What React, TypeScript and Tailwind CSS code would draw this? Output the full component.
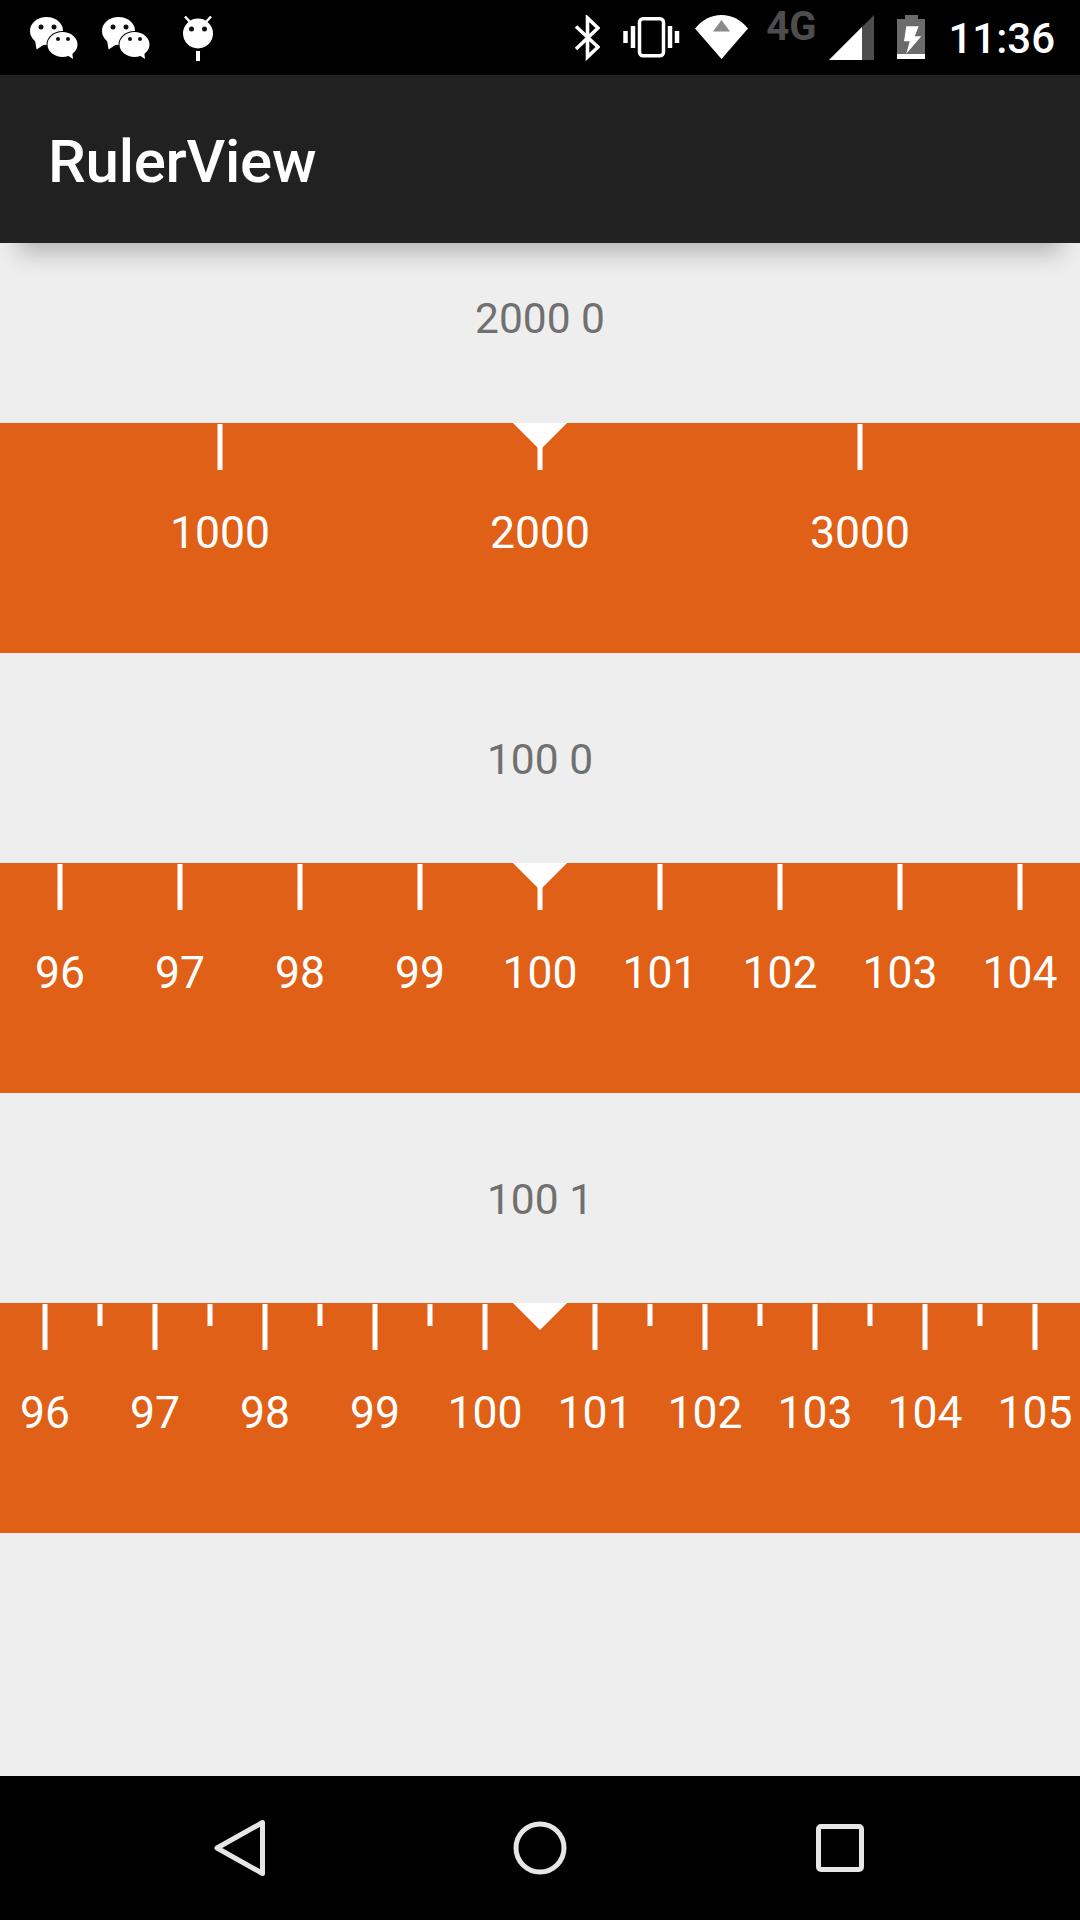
const font = { fontFamily: "Roboto, sans-serif" };

function Wechat() {
  return (
    <svg width="48" height="42" viewBox="0 0 48 42" className="block">
      <ellipse cx="16.500" cy="14" rx="16.500" ry="14" fill="#fff" />
      <path d="M5 23l1.500 9.500L15 27z" fill="#fff" />
      <ellipse cx="32.500" cy="27.500" rx="16" ry="13.500" fill="#000" />
      <ellipse cx="32.500" cy="27.500" rx="15" ry="12.500" fill="#fff" />
      <path d="M37 38l6 4-1-8z" fill="#fff" />
      <circle cx="11" cy="10" r="2.500" fill="#111" />
      <circle cx="24" cy="10" r="2.500" fill="#111" />
      <circle cx="28" cy="22" r="2" fill="#111" />
      <circle cx="38" cy="22" r="2" fill="#111" />
    </svg>
  );
}

function Droid() {
  return (
    <svg width="30" height="46" viewBox="0 0 30 46" className="block">
      <circle cx="15" cy="18.500" r="15" fill="#fff" />
      <path d="M7.500 7.500L2 1.500M22.500 7.500L28 1.500" stroke="#fff" strokeWidth="2.500" />
      <rect x="13" y="36" width="4" height="10" fill="#fff" />
      <circle cx="8.500" cy="14" r="2.500" fill="#111" />
      <circle cx="21.500" cy="14" r="2.500" fill="#111" />
    </svg>
  );
}

function StatusBar() {
  return (
    <div className="flex h-[75px] items-start bg-black text-white">
      <div className="ml-[30px] mt-[17px]"><Wechat /></div>
      <div className="ml-[24px] mt-[17px]"><Wechat /></div>
      <div className="ml-[33px] mt-[15px]"><Droid /></div>
      <div className="ml-auto flex items-start pr-[25px]">
        <svg width="26" height="46" viewBox="0 0 26 46" className="mt-[15px] block">
          <path d="M2 11.500L24 32 13.500 42V3L24 13 2 34" fill="none" stroke="#fff" strokeWidth="3.600" />
        </svg>
        <svg width="58" height="42" viewBox="0 0 58 42" className="ml-[22px] mt-[17px] block">
          <rect x="17.500" y="1.800" width="24" height="37" rx="3.500" fill="none" stroke="#fff" strokeWidth="3.500" />
          <path d="M3.500 14v12M11 9v22M48 9v22M55 14v12" stroke="#fff" strokeWidth="4.500" />
        </svg>
        <svg width="53" height="44" viewBox="0 0 53 44" className="ml-[15px] mt-[15px] block">
          <path d="M0 13.500C7 5 16 0 26.500 0S46 5 53 13.500L26.500 44z" fill="#fff" />
          <path d="M18 16.500L26.500 5 35 16.500z" fill="#8a8a8a" />
        </svg>
        <div className="ml-[18px] mt-[5px] text-[40px] font-bold leading-[44px] text-[#4d4d4d]" style={font}>4G</div>
        <svg width="45" height="45" viewBox="0 0 45 45" className="ml-[13px] mt-[15px] block">
          <path d="M0 45L45 0v45z" fill="#4d4d4d" />
          <path d="M0 45L33 12v33z" fill="#fff" />
        </svg>
        <svg width="29" height="44" viewBox="0 0 29 44" className="ml-[23px] mt-[15px] block">
          <path d="M8 0h13v4h7v35H0V4h8z" fill="#6b6b6b" />
          <rect y="39" width="28" height="5" fill="#fff" />
          <path d="M9.300 11.300h12.400l-4 10h6.600L9.300 38.700l3.400-12.400H7z" fill="#fff" />
        </svg>
        <div className="ml-[22px] mt-[15px] text-[42px] font-medium leading-[48px] text-white" style={font}>11:36</div>
      </div>
    </div>
  );
}

type Tick = { x: number; small?: boolean };
type Label = { x: number; text: string };

function Ruler({ ticks, labels }: { ticks: Tick[]; labels: Label[] }) {
  return (
    <div className="relative h-[230px] overflow-hidden bg-[#df6016]">
      {ticks.map((t) => (
        <div
          key={t.x}
          className={t.small ? "absolute top-px h-[22px] w-[5px] -translate-x-1/2 bg-white" : "absolute top-px h-[46px] w-[5px] -translate-x-1/2 bg-white"}
          style={{ left: t.x }}
        />
      ))}
      {labels.map((l) => (
        <div
          key={l.text}
          className="absolute top-[84px] -translate-x-1/2 text-[44.5px] leading-[52px] text-white"
          style={{ left: l.x, ...font }}
        >
          {l.text}
        </div>
      ))}
      <svg width="54" height="27" viewBox="0 0 54 27" className="absolute left-[513px] top-0 block">
        <path d="M0 0h54L27 27z" fill="#fff" />
      </svg>
    </div>
  );
}

const row1 = { ticks: [220, 540, 860].map((x) => ({ x })), labels: [{ x: 220, text: "1000" }, { x: 540, text: "2000" }, { x: 860, text: "3000" }] };
const nums2 = [96, 97, 98, 99, 100, 101, 102, 103, 104];
const row2 = { ticks: nums2.map((_, i) => ({ x: 60 + i * 120 })), labels: nums2.map((n, i) => ({ x: 60 + i * 120, text: String(n) })) };
const nums3 = [96, 97, 98, 99, 100, 101, 102, 103, 104, 105];
const row3 = {
  ticks: [
    ...nums3.map((_, i) => ({ x: 45 + i * 110 })),
    ...nums3.slice(0, 9).filter((_, i) => i !== 4).map((n) => ({ x: 100 + (n - 96) * 110, small: true })),
  ],
  labels: nums3.map((n, i) => ({ x: 45 + i * 110, text: String(n) })),
};

export default function App() {
  return (
    <div className="flex h-[1920px] w-[1080px] flex-col overflow-hidden bg-[#eeeeee]" style={font}>
      <StatusBar />
      <div className="relative z-10 flex h-[168px] items-center bg-[#212121] pl-[48px] pt-[5px] shadow-[0_28px_22px_-18px_rgba(0,0,0,0.24)]">
        <h1 className="text-[60px] font-medium leading-none tracking-[-0.25px] text-white">RulerView</h1>
      </div>
      <div className="flex flex-1 flex-col">
        <div className="flex h-[180px] items-start justify-center pt-[50px] text-[42.5px] leading-[52px] text-[#707070]">2000 0</div>
        <Ruler {...row1} />
        <div className="flex h-[210px] items-center justify-center pt-[3px] text-[42.5px] leading-[52px] text-[#707070]">100 0</div>
        <Ruler {...row2} />
        <div className="flex h-[210px] items-center justify-center pt-[3px] text-[42.5px] leading-[52px] text-[#707070]">100 1</div>
        <Ruler {...row3} />
      </div>
      <div className="flex h-[144px] items-start bg-black">
        <svg width="720" height="144" viewBox="0 0 720 144" className="mx-auto block">
          <path d="M37 72L82.500 46.500V97.500z" fill="none" stroke="#e6e6e6" strokeWidth="5" strokeLinejoin="round" />
          <circle cx="360" cy="72" r="24" fill="none" stroke="#e6e6e6" strokeWidth="5" />
          <rect x="638.500" y="50.500" width="43" height="43" rx="2.500" fill="none" stroke="#e6e6e6" strokeWidth="5" />
        </svg>
      </div>
    </div>
  );
}
